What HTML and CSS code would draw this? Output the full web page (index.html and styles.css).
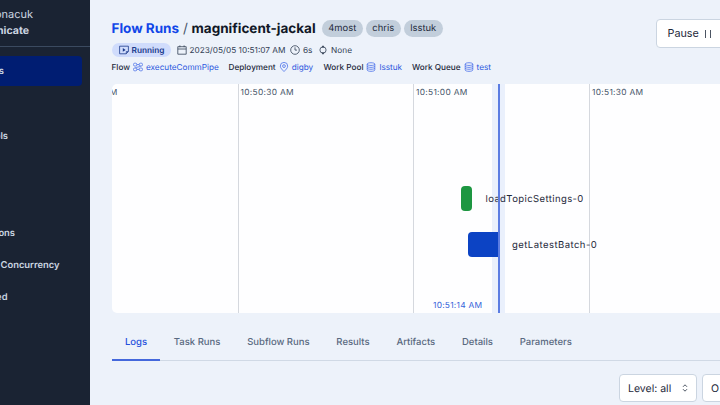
FILE: index.html
```html
<!DOCTYPE html>
<html lang="en">
<head>
<meta charset="utf-8">
<title>Flow Runs</title>
<link rel="stylesheet" href="styles.css">
</head>
<body>
<svg class="defs" width="0" height="0">
  <symbol id="db" viewBox="0 0 10 10"><path d="M1.2 2.1C1.2 .3 8.8 .3 8.8 2.1S1.2 3.9 1.2 2.1V7.9C1.2 9.8 8.8 9.8 8.8 7.9V2.1M1.2 4.1C1.2 5.8 8.8 5.8 8.8 4.1M1.2 6C1.2 7.7 8.8 7.7 8.8 6"/></symbol>
</svg>
<div class="app">
  <aside class="sidebar">
    <div class="workspace"><span class="account">onacuk</span><span class="space">nicate</span></div>
    <nav class="nav">
      <a class="item active"><span class="w-s">s</span></a>
      <a class="item"></a>
      <a class="item"><span class="w-ols">ols</span></a>
      <a class="item"></a>
      <a class="item"></a>
      <a class="item"><span class="w-ons">ons</span></a>
      <a class="item"><span class="w-con">Concurrency</span></a>
      <a class="item"><span class="w-ed">ed</span></a>
    </nav>
  </aside>
  <main class="main">
    <header class="header">
      <div class="title-row">
        <h1><a>Flow Runs</a><i>/</i><span>magnificent-jackal</span></h1>
        <span class="tag t1">4most</span><span class="tag t2">chris</span><span class="tag t3">lsstuk</span>
      </div>
      <div class="meta">
        <span class="state"><svg class="ic" viewBox="0 0 10 10"><path d="M.6 1.2H9.4V6.5L7.2 8.8H.6ZM9.2 6.6H7.3V8.6"/><path class="fill" d="M3.8 3.1V6.7L6.6 4.9Z"/></svg>Running</span>
        <span class="m-date"><svg class="ic" viewBox="0 0 10 10"><path d="M.8 1.7H9.2V9.2H.8ZM.8 4H9.2M2.9 .4V2.2M7.1 .4V2.2"/></svg>2023/05/05 10:51:07 AM</span>
        <span class="m-time"><svg class="ic" viewBox="0 0 10 10"><circle cx="5" cy="5" r="4.3"/><path d="M5 2.3V5.1H7"/></svg>6s</span>
        <span class="m-none"><svg class="ic" viewBox="0 0 10 10"><circle cx="5" cy="5" r="3.1"/><path class="fill" d="M3.4 2.4 5 .2 6.6 2.4ZM3.4 7.6 5 9.8 6.6 7.6Z"/></svg>None</span>
      </div>
      <div class="links">
        <span class="l1"><b>Flow</b><svg class="ic" viewBox="0 0 10 10"><rect x=".5" y="1.2" width="3.3" height="2.8" rx="1.2"/><rect x="6.2" y="1.2" width="3.3" height="2.8" rx="1.2"/><rect x=".5" y="6" width="3.3" height="2.8" rx="1.2"/><rect x="6.2" y="6" width="3.3" height="2.8" rx="1.2"/><path d="M3.8 2.6H6.2M3.8 7.4H6.2M7.8 4C7.8 5 2.2 5 2.2 6"/></svg><a>executeCommPipe</a></span>
        <span class="l2"><b>Deployment</b><svg class="ic" viewBox="0 0 10 10"><path d="M5 9.5C3.4 7.9 1.3 6 1.3 4.1A3.7 3.7 0 0 1 8.7 4.1C8.7 6 6.6 7.9 5 9.5Z"/><circle cx="5" cy="4.1" r="1.4"/></svg><a>digby</a></span>
        <span class="l3"><b>Work Pool</b><svg class="ic"><use href="#db"/></svg><a>lsstuk</a></span>
        <span class="l4"><b>Work Queue</b><svg class="ic"><use href="#db"/></svg><a>test</a></span>
      </div>
      <button class="pause">Pause<svg viewBox="0 0 8 10"><path d="M1.5 1V9M6.5 1V9"/></svg></button>
    </header>
    <section class="timeline">
      <div class="tick first"><span>M</span></div>
      <div class="tick"><span>10:50:30 AM</span></div>
      <div class="tick"><span>10:51:00 AM</span></div>
      <div class="tick"><span>10:51:30 AM</span></div>
      <div class="now-band"></div>
      <div class="bar done"></div>
      <div class="bar running"></div>
      <span class="label a">loadTopicSettings-0</span>
      <span class="label b">getLatestBatch-0</span>
      <div class="now-line"></div>
      <span class="now-time">10:51:14 AM</span>
    </section>
    <nav class="tabs">
      <a class="tab selected">Logs</a><a class="tab">Task Runs</a><a class="tab">Subflow Runs</a><a class="tab">Results</a><a class="tab">Artifacts</a><a class="tab">Details</a><a class="tab">Parameters</a>
    </nav>
    <div class="filters">
      <div class="select level">Level: all<svg viewBox="0 0 6 8"><path d="M1 2.8 3 .8 5 2.8M1 5.2 3 7.2 5 5.2"/></svg></div>
      <div class="select order">O</div>
    </div>
  </main>
</div>
</body>
</html>
```

FILE: styles.css
```css
* { box-sizing: border-box; }
body { margin: 0; width: 720px; height: 405px; overflow: hidden; font-family: Inter, "Liberation Sans", sans-serif; color: #1e293b; text-rendering: geometricPrecision; }
.defs { position: absolute; }
.app { display: flex; width: 720px; height: 405px; background: #edf2fa; }
svg { fill: none; stroke: currentColor; stroke-width: .8; flex: none; }
.fill { fill: currentColor; stroke: none; }

.sidebar { width: 90px; flex: none; background: #1a2333; color: #cbd5e1; overflow: hidden; }
.workspace { height: 47px; padding-top: 6px; border-bottom: 1px solid #3b4a60; display: flex; flex-direction: column; }
.workspace span { height: 16px; line-height: 16px; font-size: 11px; display: flex; justify-content: flex-end; }
.account { width: 33px; }
.workspace .space { width: 29px; font-weight: 700; font-size: 10.6px; line-height: 18px; }
.nav { padding-top: 8.5px; display: flex; flex-direction: column; gap: 2.4px; }
.item { width: 82px; height: 30px; padding-top: 1.5px; display: flex; align-items: center; border-radius: 0 4px 4px 0; font-size: 9.4px; font-weight: 600; }
.item span { display: flex; justify-content: flex-end; }
.active { background: #001d72; }
.w-s { width: 4px; }
.w-ols { width: 8px; }
.w-ons { width: 15px; }
.w-con { width: 59.5px; }
.w-ed { width: 7.5px; }

.main { flex: 1; min-width: 0; padding-left: 21.5px; overflow: hidden; }
.header { height: 84px; padding-top: 19px; display: grid; grid-template-columns: 544px 90px; grid-template-rows: 19px 23px 12px; }
.title-row, .meta, .links { display: flex; align-items: center; white-space: nowrap; grid-column: 1; }
h1 { margin: 0; width: 210px; font-size: 13.5px; line-height: 19px; padding-top: 2px; font-weight: 700; color: #111827; display: flex; }
h1 a { color: #1146e8; width: 71.5px; }
h1 i { font-style: normal; font-weight: 400; width: 8.5px; color: #475569; }
.tag { height: 17px; border-radius: 9px; background: #c2cedb; font-size: 9.4px; line-height: 18px; text-align: center; margin-right: 3px; }
.t1 { width: 41.5px; }
.t2 { width: 34.5px; }
.t3 { width: 39.5px; }
.ic { width: 10px; height: 10px; }
.meta { font-size: 8.25px; color: #334155; }
.meta span { display: flex; align-items: center; gap: 3px; }
.state { width: 59px; height: 14px; padding-left: 7px; border-radius: 7px; background: #d0dcfc; color: #1b3a8c; font-weight: 600; margin-right: 6px; }
.m-date { width: 113.5px; }
.m-time { width: 28px; }
.m-none { letter-spacing: .1px; }
.links { font-size: 8.2px; }
.links span { display: flex; align-items: center; }
.links b { font-weight: 500; margin-right: 3px; }
.links .ic { margin-right: 3px; color: #4a70ea; }
.links a { color: #2b57de; }
.l1 { width: 117px; }
.l2 { width: 95px; }
.l3 { width: 88.5px; }
.pause { grid-column: 2; grid-row: 1 / 4; width: 90px; height: 29px; margin: 0; padding: 0 0 0 11px; border: 1px solid #cbd5e1; border-radius: 4px; background: #fff; font: 10.8px Inter, sans-serif; color: #1e293b; display: flex; align-items: center; gap: 5px; }
.pause svg { width: 8px; height: 10px; }

.timeline { position: relative; height: 229px; width: 640px; background: #fefeff; border-radius: 5px; overflow: hidden; display: grid; grid-template-columns: 126px 175.5px 176px 162.5px; }
.tick { border-left: 1px solid #d5d8de; padding: 4px 0 0 2px; font-size: 8.4px; line-height: 11px; letter-spacing: .3px; color: #475569; white-space: nowrap; }
.tick.first { border: 0; padding-left: 0; }
.first span { width: 6px; display: flex; justify-content: flex-end; }
.now-band { position: absolute; left: 380.5px; top: 0; width: 13px; height: 100%; background: #eaf0fc; }
.now-line { position: absolute; left: 386.5px; top: 0; width: 1.5px; height: 100%; background: #5b7ce2; }
.bar { position: absolute; }
.done { left: 349.5px; top: 102px; width: 11px; height: 25px; background: #1d9641; border-radius: 4px; }
.running { left: 356.5px; top: 148px; width: 31px; height: 25px; background: #0c43c4; border-radius: 4px 0 0 4px; }
.label { position: absolute; font-size: 9.5px; line-height: 14px; letter-spacing: .4px; color: #1e293b; white-space: nowrap; }
.a { left: 374px; top: 109px; }
.b { left: 400.5px; top: 155px; letter-spacing: .46px; }
.now-time { position: absolute; left: 321.5px; top: 217px; font-size: 8.4px; line-height: 11px; letter-spacing: .25px; color: #3563da; white-space: nowrap; }

.tabs { height: 48px; width: 640px; display: flex; border-bottom: 1px solid #d0d9e5; white-space: nowrap; }
.tab { height: 48px; padding: 0 13.4px; line-height: 60px; font-size: 9.5px; font-weight: 500; color: #596980; }
.selected { color: #2450dc; border-bottom: 2px solid #4468dc; }
.filters { display: flex; gap: 5px; padding: 13px 0 0 507.5px; width: 640px; }
.select { height: 28px; border: 1px solid #cbd5e1; border-radius: 4px; background: #fff; font-size: 10.5px; display: flex; align-items: center; justify-content: space-between; padding: 0 8px; flex: none; }
.level { width: 78px; }
.select svg { width: 6px; height: 8px; }
.order { width: 78px; }
```
